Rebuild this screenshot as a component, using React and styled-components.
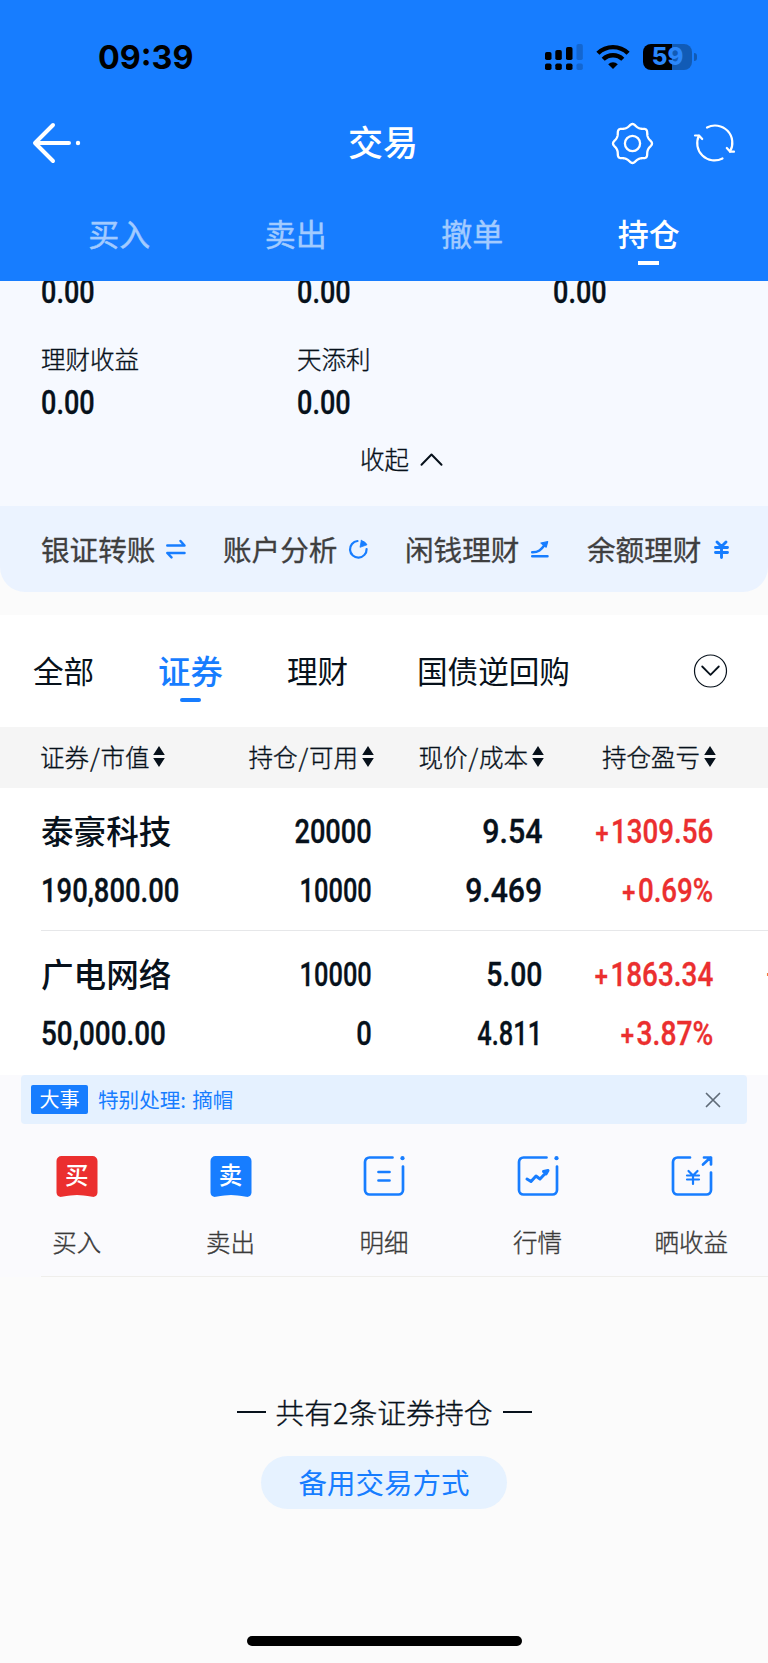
import React from 'react';
import styled, { createGlobalStyle, css } from 'styled-components';

const blue = '#177dff';
const ink = '#07111b';
const red = '#eb2f2f';

const GlobalStyle = createGlobalStyle`
  * { box-sizing: border-box; }
  body {
    margin: 0;
    background: #fbfbfb;
    color: ${ink};
    font-family: "Noto Sans CJK SC", sans-serif;
    overflow-x: hidden;
  }
  svg { display: block; flex: none; overflow: visible; }
`;

/* Light strokes thickened slightly, between the light and regular weights. */
const bookWeight = css`
  font-weight: 300;
  -webkit-text-stroke: 0.35px currentColor;
`;

const Page = styled.main`
  width: 768px;
  height: 1663px;
  overflow: hidden;
  display: flex;
  flex-direction: column;
  background: #fbfbfb;
  white-space: nowrap;
`;

/* ---------- header ---------- */
const Header = styled.header`
  height: 281px;
  flex: none;
  background: ${blue};
  color: #fff;
`;
const StatusBar = styled.div`
  height: 98px;
  padding: 16px 71px 0 98px;
  display: flex;
  align-items: center;
  justify-content: space-between;
`;
const Clock = styled.span`
  font: 700 33px/40px Inter, sans-serif;
  color: #000;
  transform: scaleX(0.98);
  transform-origin: left;
`;
const StatusIcons = styled.div`
  display: flex;
  align-items: center;
  gap: 13px;
  height: 28px;
`;
const Battery = styled.div`
  display: flex;
  align-items: center;
  gap: 2px;
`;
const BatteryBody = styled.div`
  width: 49px;
  height: 26px;
  border-radius: 8px;
  background: linear-gradient(90deg, #000 59%, #115bb6 59%);
  display: flex;
  align-items: center;
  justify-content: center;
`;
const BatteryText = styled.span`
  font: 800 24px/26px Inter, sans-serif;
  color: #2b87fb;
`;
const BatteryCap = styled.i`
  width: 3px;
  height: 8px;
  border-radius: 0 4px 4px 0;
  background: #115bb6;
`;
const NavBar = styled.div`
  height: 90px;
  padding: 0 33px;
  display: grid;
  grid-template-columns: 1fr auto 1fr;
  align-items: center;
`;
const Title = styled.h1`
  margin: 0 0 4px;
  font-size: 35px;
  line-height: 50px;
  font-weight: 500;
  transform: translateX(-1px);
`;
const NavActions = styled.div`
  display: flex;
  justify-content: flex-end;
  align-items: center;
  gap: 41px;
`;
const TradeTabs = styled.nav`
  height: 93px;
  padding: 22px 31px 0;
  display: grid;
  grid-template-columns: repeat(4, 1fr);
`;
const TradeTab = styled.div`
  display: flex;
  flex-direction: column;
  align-items: center;
  font-size: 31px;
  line-height: 46px;
  font-weight: ${p => (p.$active ? 500 : 400)};
  color: ${p => (p.$active ? '#fff' : '#a2cbff')};
  -webkit-text-stroke: ${p => (p.$active ? '0' : '0.4px')};
  &::after {
    content: '';
    width: 21px;
    height: 4px;
    margin-top: 5px;
    background: ${p => (p.$active ? '#fff' : 'transparent')};
  }
`;

/* ---------- numbers ---------- */
const Figure = styled.span`
  display: inline-block;
  font: 500 33px/36px Roboto, sans-serif;
  -webkit-text-stroke: 0.35px currentColor;
  transform: scaleX(${p => p.$fit});
  transform-origin: ${p => (p.$start ? 'left' : 'right')} center;
`;
const Sign = styled.span`
  font-size: 28px;
  line-height: 30px;
  margin-right: 3px;
`;

/* ---------- asset summary ---------- */
const Summary = styled.section`
  height: 225px;
  flex: none;
  overflow: hidden;
  background: #f6f9ff;
`;
const SummaryRow = styled.div`
  display: grid;
  grid-template-columns: repeat(3, 256px);
  padding-left: 41px;
  margin-top: ${p => p.$top}px;
`;
const SummaryItem = styled.div`
  display: flex;
  flex-direction: column;
  align-items: flex-start;
  gap: 8px;
`;
const SummaryLabel = styled.span`
  font-size: 24.5px;
  line-height: 36px;
  ${bookWeight}
`;
const Collapse = styled.div`
  margin-top: 20px;
  padding-left: 360px;
  display: flex;
  align-items: center;
  gap: 11px;
  font-size: 24.5px;
  line-height: 36px;
  ${bookWeight}
`;

const QuickBar = styled.section`
  height: 86px;
  flex: none;
  background: linear-gradient(#f6f9ff 0 0) top / 100% 40px no-repeat, #fbfbfb;
`;
const QuickInner = styled.div`
  height: 86px;
  padding-left: 41px;
  border-radius: 0 0 25px 25px;
  background: #ebf3ff;
  display: grid;
  grid-template-columns: 182px 182px 182px 1fr;
  align-items: center;
`;
const QuickLink = styled.div`
  display: flex;
  align-items: center;
  gap: ${p => p.$gap}px;
  font-size: 28.6px;
  line-height: 42px;
  color: #3f3f3f;
  -webkit-text-stroke: 0.3px #3f3f3f;
`;

/* ---------- category tabs ---------- */
const Categories = styled.nav`
  margin-top: 23px;
  height: 112px;
  flex: none;
  padding: 0 41px 0 33px;
  background: #fff;
  display: grid;
  grid-template-columns: 125px 129px 130px 1fr 34px;
  align-items: center;
`;
const Category = styled.div`
  display: flex;
  flex-direction: column;
  align-items: center;
  justify-self: start;
  padding-top: 6px;
  font-size: ${p => (p.$active ? 32.4 : 30.6)}px;
  line-height: 46px;
  font-weight: ${p => (p.$active ? 500 : 400)};
  color: ${p => (p.$active ? blue : ink)};
  &::after {
    content: '';
    width: 21px;
    height: 4px;
    margin-top: 5px;
    border-radius: 2px;
    background: ${p => (p.$active ? blue : 'transparent')};
  }
`;

/* ---------- holdings ---------- */
const TableHead = styled.div`
  display: grid;
  grid-template-columns: 165px 169px 170px 172px;
  height: 61px;
  flex: none;
  padding: 0 0 2px 40px;
  background: #f5f5f5;
  align-items: center;
`;
const HeadCell = styled.div`
  display: flex;
  align-items: center;
  justify-content: ${p => (p.$start ? 'flex-start' : 'flex-end')};
  gap: 4px;
  font-size: 24.5px;
  line-height: 36px;
  ${bookWeight}
`;
const Slash = styled.span`
  margin: 0 0.9px;
`;
const Holding = styled.div`
  height: ${p => (p.$line ? 143 : 144)}px;
  flex: none;
  padding-left: 41px;
  background: #fff;
  overflow: hidden;
`;
const HoldingGrid = styled.div`
  display: grid;
  grid-template-columns: 165px 165.5px 171px 171px 54px;
  grid-template-rows: 54px 64px;
  width: 727px;
  height: 143px;
  padding-top: 17px;
  align-items: center;
  border-bottom: ${p => (p.$line ? '1px solid #e6e7e9' : '0')};
`;
const StockName = styled.span`
  font-size: 32.6px;
  line-height: 46px;
  margin-bottom: 5px;
  font-weight: 500;
`;
const Cell = styled.div`
  display: flex;
  justify-content: ${p => (p.$start ? 'flex-start' : 'flex-end')};
  color: ${p => (p.$gain ? red : 'inherit')};
`;
const NextColumn = styled.div`
  padding-left: 53px;
  height: 36px;
  width: 54px;
  overflow: hidden;
  font: 500 27px/36px Roboto, sans-serif;
  color: ${red};
`;

/* ---------- expanded row ---------- */
const Detail = styled.section`
  height: 202px;
  flex: none;
  background: #fafafd;
`;
const Event = styled.div`
  height: 49px;
  margin: 0 21px;
  padding: 0 27px 0 10px;
  border-radius: 4px;
  background: #e5f1ff;
  display: flex;
  align-items: center;
  font-size: 20.6px;
  color: ${blue};
`;
const EventTag = styled.span`
  width: 57px;
  height: 29px;
  margin-right: 10px;
  border-radius: 2px;
  background: ${blue};
  color: #fff;
  font-size: 20px;
  line-height: 28px;
  text-align: center;
`;
const EventText = styled.span`
  flex: 1;
  line-height: 30px;
  padding-bottom: 1px;
  word-spacing: 1.5px;
`;
const Actions = styled.div`
  height: 152px;
  display: grid;
  grid-template-columns: repeat(5, 1fr);
  padding-top: 32px;
`;
const Action = styled.div`
  display: flex;
  flex-direction: column;
  align-items: center;
  gap: 27px;
  font-size: 24.5px;
  line-height: 36px;
  color: #3a3a3a;
  ${bookWeight}
`;
const Rule = styled.div`
  height: 1px;
  margin-left: 41px;
  background: #efeeeb;
`;

/* ---------- footer ---------- */
const Footer = styled.footer`
  flex: 1;
  display: flex;
  flex-direction: column;
  align-items: center;
  padding-top: 114px;
`;
const Count = styled.div`
  display: flex;
  align-items: center;
  gap: 10px;
  font-size: 28.8px;
  line-height: 42px;
  ${bookWeight}
  &::before, &::after {
    content: '';
    width: 29px;
    height: 1.5px;
    background: ${ink};
  }
`;
const BackupButton = styled.button`
  margin: 23px 0 0;
  width: 246px;
  height: 53px;
  border: 0;
  padding: 0 0 1px;
  border-radius: 27px;
  background: #e6f2ff;
  color: ${blue};
  font: 400 28.5px/42px "Noto Sans CJK SC", sans-serif;
`;
const HomeIndicator = styled.div`
  width: 275px;
  height: 10px;
  margin-top: 127px;
  border-radius: 5px;
  background: #000;
`;

/* ---------- icons ---------- */
const SignalIcon = () => (
  <svg width="38" height="26" viewBox="0 0 38 26">
    <rect x="0" y="8" width="6.5" height="8" rx="1.8" />
    <rect x="10.3" y="6" width="6.5" height="10" rx="1.8" />
    <rect x="21" y="3" width="6.5" height="13" rx="1.8" />
    <rect x="31.5" y="0" width="6.3" height="16" rx="1.8" fill="#1366d0" />
    {[0, 10.3, 21].map(x => <rect key={x} x={x} y="19.5" width="6.5" height="6.5" rx="1.8" />)}
    <rect x="31.5" y="19.5" width="6.3" height="6.5" rx="1.8" fill="#1366d0" />
  </svg>
);
const WifiIcon = () => (
  <svg width="34" height="26" viewBox="0 0 34 26" fill="none" stroke="#000" strokeWidth="4.4">
    <path d="M1.9 9.3a21.6 21.6 0 0 1 30.2 0" />
    <path d="M7.2 15.3a14 14 0 0 1 19.6 0" />
    <path d="M17 25l-4.8-4.8a7 7 0 0 1 9.6 0z" fill="#000" stroke="none" />
  </svg>
);
const BackIcon = () => (
  <svg width="48" height="40" viewBox="0 0 48 40" fill="none" stroke="#fff" strokeWidth="4" strokeLinecap="round" strokeLinejoin="round">
    <path d="M20 2L2 20l18 18M3 20h33" />
    <circle cx="45" cy="20" r="2.2" fill="#fff" stroke="none" />
  </svg>
);
const gearPath = (() => {
  const pts = [];
  for (let i = 0; i <= 160; i += 1) {
    const a = (i / 160) * Math.PI * 2;
    const r = 17.9 + 1.4 * Math.cos(8 * a) + 0.2 * Math.cos(16 * a);
    pts.push(`${(20.5 + r * Math.sin(a)).toFixed(2)} ${(20.5 - r * Math.cos(a)).toFixed(2)}`);
  }
  return `M${pts.join('L')}Z`;
})();
const GearIcon = () => (
  <svg width="41" height="41" viewBox="0 0 41 41" fill="none" stroke="#fff" strokeWidth="2.3" strokeLinejoin="round">
    <path d={gearPath} />
    <circle cx="20.5" cy="20.5" r="7.6" />
  </svg>
);
const RefreshIcon = () => (
  <svg width="41" height="37" viewBox="0 0 41 37" fill="none" stroke="#fff" strokeWidth="2.2" strokeLinecap="round" strokeLinejoin="round">
    <path d="M13 2.500A17.300 17.300 0 0 1 36 26.500L32.800 23" />
    <path d="M36 26.700h4" />
    <path d="M28.500 33.500A17.300 17.300 0 0 1 5 10.500L8.200 14M5 10.500H1" />
  </svg>
);
const ChevronUp = () => (
  <svg width="23" height="13" viewBox="0 0 23 13" fill="none" stroke={ink} strokeWidth="2" strokeLinecap="round" strokeLinejoin="round">
    <path d="M1.500 11.800L11.500 1.500l10 10.300" />
  </svg>
);
const TransferIcon = () => (
  <svg width="20" height="20" viewBox="0 0 20 20" fill="none" stroke={blue} strokeWidth="2.500" strokeLinecap="round" strokeLinejoin="round">
    <path d="M1.300 6.500H18.500L14.500 2M18.500 14H1.300L5.500 18.300" />
  </svg>
);
const AnalysisIcon = () => (
  <svg width="19" height="20" viewBox="0 0 19 20" fill="none" stroke={blue} strokeWidth="2.200" strokeLinecap="round">
    <path d="M8.500 2A8.300 8.300 0 1 0 17.600 10" />
    <path d="M12.300 1.500L11 8.300l7-2.500a8 8 0 0 0-5.700-4.300z" fill={blue} stroke={blue} strokeWidth="0.800" />
  </svg>
);
const GrowthIcon = () => (
  <svg width="18" height="18" viewBox="0 0 18 18" fill="none" stroke={blue} strokeWidth="2.500" strokeLinecap="round" strokeLinejoin="round">
    <path d="M1.200 16.300H16.500M1.200 12.300c6 .2 9-2.500 13-8" />
    <path d="M10 3l6.700-1.300-1.500 5.500z" fill={blue} strokeWidth="1.200" />
  </svg>
);
const YenIcon = () => (
  <svg width="15" height="19" viewBox="0 0 15 19" fill="none" stroke={blue} strokeWidth="2.900" strokeLinecap="round">
    <path d="M3 2l4.500 4.500L12 2M1.500 7.500h12M1.500 12.500h12M7.500 6.500v11" />
  </svg>
);
const MoreIcon = () => (
  <svg width="34" height="34" viewBox="0 0 34 34" fill="none" stroke={ink} strokeLinecap="round" strokeLinejoin="round">
    <circle cx="17.500" cy="17" r="16" strokeWidth="1.200" />
    <path d="M9.200 12.500L17.500 20.800l8.300-8.300" strokeWidth="1.800" />
  </svg>
);
const SortIcon = () => (
  <svg width="12" height="21" viewBox="0 0 12 21" fill={ink}>
    <path d="M6 0l5.800 9H.2zM6 21l5.800-9H.2z" />
  </svg>
);
const CloseIcon = () => (
  <svg width="14" height="14" viewBox="0 0 14 14" stroke="#5f6b78" strokeWidth="1.700" strokeLinecap="round">
    <path d="M.5.5l13 13M13.500.5L.5 13.500" />
  </svg>
);
const BadgeBody = styled.span`
  display: grid;
  width: 41px;
  height: 41px;
  > * { grid-area: 1 / 1; }
`;
const BadgeText = styled.span`
  color: #fff;
  font-size: 23.5px;
  font-weight: 500;
  line-height: 37px;
  text-align: center;
  -webkit-text-stroke: 0;
`;
const Badge = ({ color, children }) => (
  <BadgeBody>
    <svg width="41" height="41" viewBox="-0.500 0 41 41" fill={color}>
      <path d="M5 0h31a5 5 0 0 1 5 5v31.500c0 3-2.500 4.800-5.300 4.300Q26 38.900 20.500 38.900T5.300 40.800C2.500 41.300 0 39.500 0 36.500V5a5 5 0 0 1 5-5z" />
    </svg>
    <BadgeText>{children}</BadgeText>
  </BadgeBody>
);
const FrameIcon = ({ share, children }) => (
  <svg width="41" height="41" viewBox="-0.500 0 41 41" fill="none" stroke={blue} strokeWidth="2.700" strokeLinecap="round" strokeLinejoin="round">
    {share ? (
      <>
        <path d="M18.500 1.500H6a4.500 4.500 0 0 0-4.500 4.500v28A4.500 4.500 0 0 0 6 38.500h29A4.500 4.500 0 0 0 39.500 34V16.500" />
        <path d="M31.500 8.500l7.500-7M32.500 1.500h7v7" />
      </>
    ) : (
      <>
        <path d="M29 1.500H6A4.500 4.500 0 0 0 1.500 6v28A4.500 4.500 0 0 0 6 38.500h29A4.500 4.500 0 0 0 39.500 34V10.500" />
        <circle cx="39" cy="2.200" r="2.100" fill={blue} stroke="none" />
      </>
    )}
    {children}
  </svg>
);

/* ---------- data ---------- */
const holdings = [
  {
    name: '泰豪科技',
    value: ['190,800.00', 0.83],
    qty: ['20000', 0.825],
    usable: ['10000', 0.77],
    price: ['9.54', 0.92],
    cost: ['9.469', 0.915],
    profit: ['1309.56', 0.84],
    rate: ['0.69%', 0.84],
  },
  {
    name: '广电网络',
    value: ['50,000.00', 0.845],
    qty: ['10000', 0.77],
    usable: ['0', 0.83],
    price: ['5.00', 0.86],
    cost: ['4.811', 0.77],
    profit: ['1863.34', 0.845],
    rate: ['3.87%', 0.855],
    more: true,
  },
];

const Amount = ({ data, start, gain }) => (
  <Cell $start={start} $gain={gain}>
    <Figure $fit={data[1]} $start={start}>
      {gain && <Sign>+</Sign>}
      {data[0]}
    </Figure>
  </Cell>
);
const Zero = () => <Figure $fit={0.82} $start>0.00</Figure>;
const PairLabel = ({ first, second }) => (
  <span>{first}<Slash>/</Slash>{second}</span>
);

export default function App() {
  return (
    <Page>
      <GlobalStyle />
      <Header>
        <StatusBar>
          <Clock>09:39</Clock>
          <StatusIcons>
            <SignalIcon />
            <WifiIcon />
            <Battery>
              <BatteryBody><BatteryText>59</BatteryText></BatteryBody>
              <BatteryCap />
            </Battery>
          </StatusIcons>
        </StatusBar>
        <NavBar>
          <BackIcon />
          <Title>交易</Title>
          <NavActions><GearIcon /><RefreshIcon /></NavActions>
        </NavBar>
        <TradeTabs>
          <TradeTab>买入</TradeTab>
          <TradeTab>卖出</TradeTab>
          <TradeTab>撤单</TradeTab>
          <TradeTab $active>持仓</TradeTab>
        </TradeTabs>
      </Header>

      <Summary>
        <SummaryRow $top={-7}><Zero /><Zero /><Zero /></SummaryRow>
        <SummaryRow $top={31}>
          <SummaryItem><SummaryLabel>理财收益</SummaryLabel><Zero /></SummaryItem>
          <SummaryItem><SummaryLabel>天添利</SummaryLabel><Zero /></SummaryItem>
        </SummaryRow>
        <Collapse>收起<ChevronUp /></Collapse>
      </Summary>

      <QuickBar>
        <QuickInner>
          <QuickLink $gap={11}>银证转账<TransferIcon /></QuickLink>
          <QuickLink $gap={12}>账户分析<AnalysisIcon /></QuickLink>
          <QuickLink $gap={12}>闲钱理财<GrowthIcon /></QuickLink>
          <QuickLink $gap={13}>余额理财<YenIcon /></QuickLink>
        </QuickInner>
      </QuickBar>

      <Categories>
        <Category>全部</Category>
        <Category $active>证券</Category>
        <Category>理财</Category>
        <Category>国债逆回购</Category>
        <MoreIcon />
      </Categories>

      <TableHead>
        <HeadCell $start><PairLabel first="证券" second="市值" /><SortIcon /></HeadCell>
        <HeadCell><PairLabel first="持仓" second="可用" /><SortIcon /></HeadCell>
        <HeadCell><PairLabel first="现价" second="成本" /><SortIcon /></HeadCell>
        <HeadCell>持仓盈亏<SortIcon /></HeadCell>
      </TableHead>

      {holdings.map((h, i) => (
        <Holding key={h.name} $line={i === 0}>
          <HoldingGrid $line={i === 0}>
            <StockName>{h.name}</StockName>
            <Amount data={h.qty} />
            <Amount data={h.price} />
            <Amount data={h.profit} gain />
            {h.more ? <NextColumn>+</NextColumn> : <span />}
            <Amount data={h.value} start />
            <Amount data={h.usable} />
            <Amount data={h.cost} />
            <Amount data={h.rate} gain />
          </HoldingGrid>
        </Holding>
      ))}

      <Detail>
        <Event>
          <EventTag>大事</EventTag>
          <EventText>特别处理: 摘帽</EventText>
          <CloseIcon />
        </Event>
        <Actions>
          <Action><Badge color="#eb2f2f">买</Badge>买入</Action>
          <Action><Badge color={blue}>卖</Badge>卖出</Action>
          <Action>
            <FrameIcon><path d="M15 16h11M15 24.500h11" /></FrameIcon>明细
          </Action>
          <Action>
            <FrameIcon><path d="M9.500 23l4 2.500 5-5.500 4 3L30.500 14.500M26 15.500l4.500-1-2 3.500" strokeWidth="3" /></FrameIcon>行情
          </Action>
          <Action>
            <FrameIcon share><path d="M17 15l4.500 4.500L26 15M15.500 19.500h12M15.500 23.500h12M21.500 19.500v8.500" strokeWidth="2.200" /></FrameIcon>晒收益
          </Action>
        </Actions>
        <Rule />
      </Detail>

      <Footer>
        <Count>共有2条证券持仓</Count>
        <BackupButton>备用交易方式</BackupButton>
        <HomeIndicator />
      </Footer>
    </Page>
  );
}
